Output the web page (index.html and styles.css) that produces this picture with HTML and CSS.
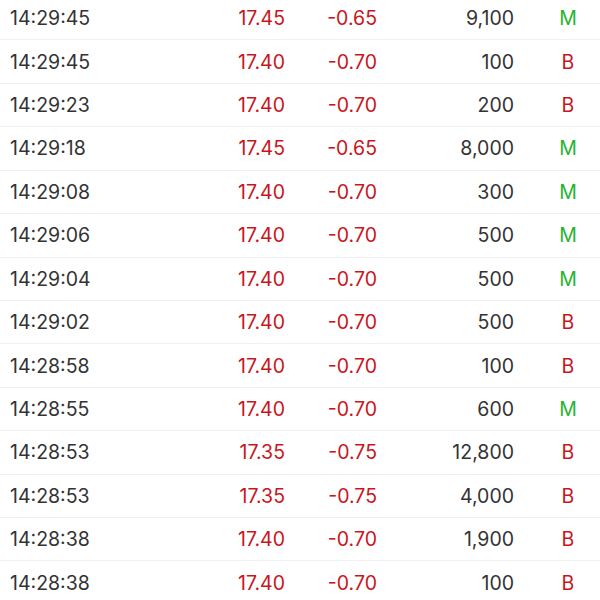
FILE: index.html
```html
<!DOCTYPE html>
<html>
<head>
<meta charset="utf-8">
<link rel="stylesheet" href="styles.css">
</head>
<body>
<div class="list">
  <div class="row"><span class="time">14:29:45</span><span class="price">17.45</span><span class="chg">-0.65</span><span class="vol">9,100</span><span class="type m">M</span></div>
  <div class="row"><span class="time">14:29:45</span><span class="price">17.40</span><span class="chg">-0.70</span><span class="vol">100</span><span class="type b">B</span></div>
  <div class="row"><span class="time">14:29:23</span><span class="price">17.40</span><span class="chg">-0.70</span><span class="vol">200</span><span class="type b">B</span></div>
  <div class="row"><span class="time">14:29:18</span><span class="price">17.45</span><span class="chg">-0.65</span><span class="vol">8,000</span><span class="type m">M</span></div>
  <div class="row"><span class="time">14:29:08</span><span class="price">17.40</span><span class="chg">-0.70</span><span class="vol">300</span><span class="type m">M</span></div>
  <div class="row"><span class="time">14:29:06</span><span class="price">17.40</span><span class="chg">-0.70</span><span class="vol">500</span><span class="type m">M</span></div>
  <div class="row"><span class="time">14:29:04</span><span class="price">17.40</span><span class="chg">-0.70</span><span class="vol">500</span><span class="type m">M</span></div>
  <div class="row"><span class="time">14:29:02</span><span class="price">17.40</span><span class="chg">-0.70</span><span class="vol">500</span><span class="type b">B</span></div>
  <div class="row"><span class="time">14:28:58</span><span class="price">17.40</span><span class="chg">-0.70</span><span class="vol">100</span><span class="type b">B</span></div>
  <div class="row"><span class="time">14:28:55</span><span class="price">17.40</span><span class="chg">-0.70</span><span class="vol">600</span><span class="type m">M</span></div>
  <div class="row"><span class="time">14:28:53</span><span class="price">17.35</span><span class="chg">-0.75</span><span class="vol">12,800</span><span class="type b">B</span></div>
  <div class="row"><span class="time">14:28:53</span><span class="price">17.35</span><span class="chg">-0.75</span><span class="vol">4,000</span><span class="type b">B</span></div>
  <div class="row"><span class="time">14:28:38</span><span class="price">17.40</span><span class="chg">-0.70</span><span class="vol">1,900</span><span class="type b">B</span></div>
  <div class="row"><span class="time">14:28:38</span><span class="price">17.40</span><span class="chg">-0.70</span><span class="vol">100</span><span class="type b">B</span></div>
</div>
</body>
</html>
```
FILE: styles.css
```css
html, body {
  margin: 0;
  padding: 0;
  background: #ffffff;
  overflow: hidden;
}
.list {
  margin-top: -3px;
  font-family: "Inter", "Liberation Sans", sans-serif;
  font-size: 19.5px;
  color: #333333;
}
.row {
  display: flex;
  align-items: center;
  height: 43.43px;
  box-sizing: border-box;
  border-bottom: 1px solid #efefef;
  padding-left: 10px;
  width: 600px;
}
.row > span { flex-shrink: 0; }
.time { width: 180px; }
.price { width: 95px; text-align: right; color: #c8161d; }
.chg { width: 92px; text-align: right; color: #c8161d; }
.vol { width: 137px; text-align: right; }
.type { width: 56px; margin-left: 26px; text-align: center; }
.m { color: #27b32f; }
.b { color: #c8161d; }
```
